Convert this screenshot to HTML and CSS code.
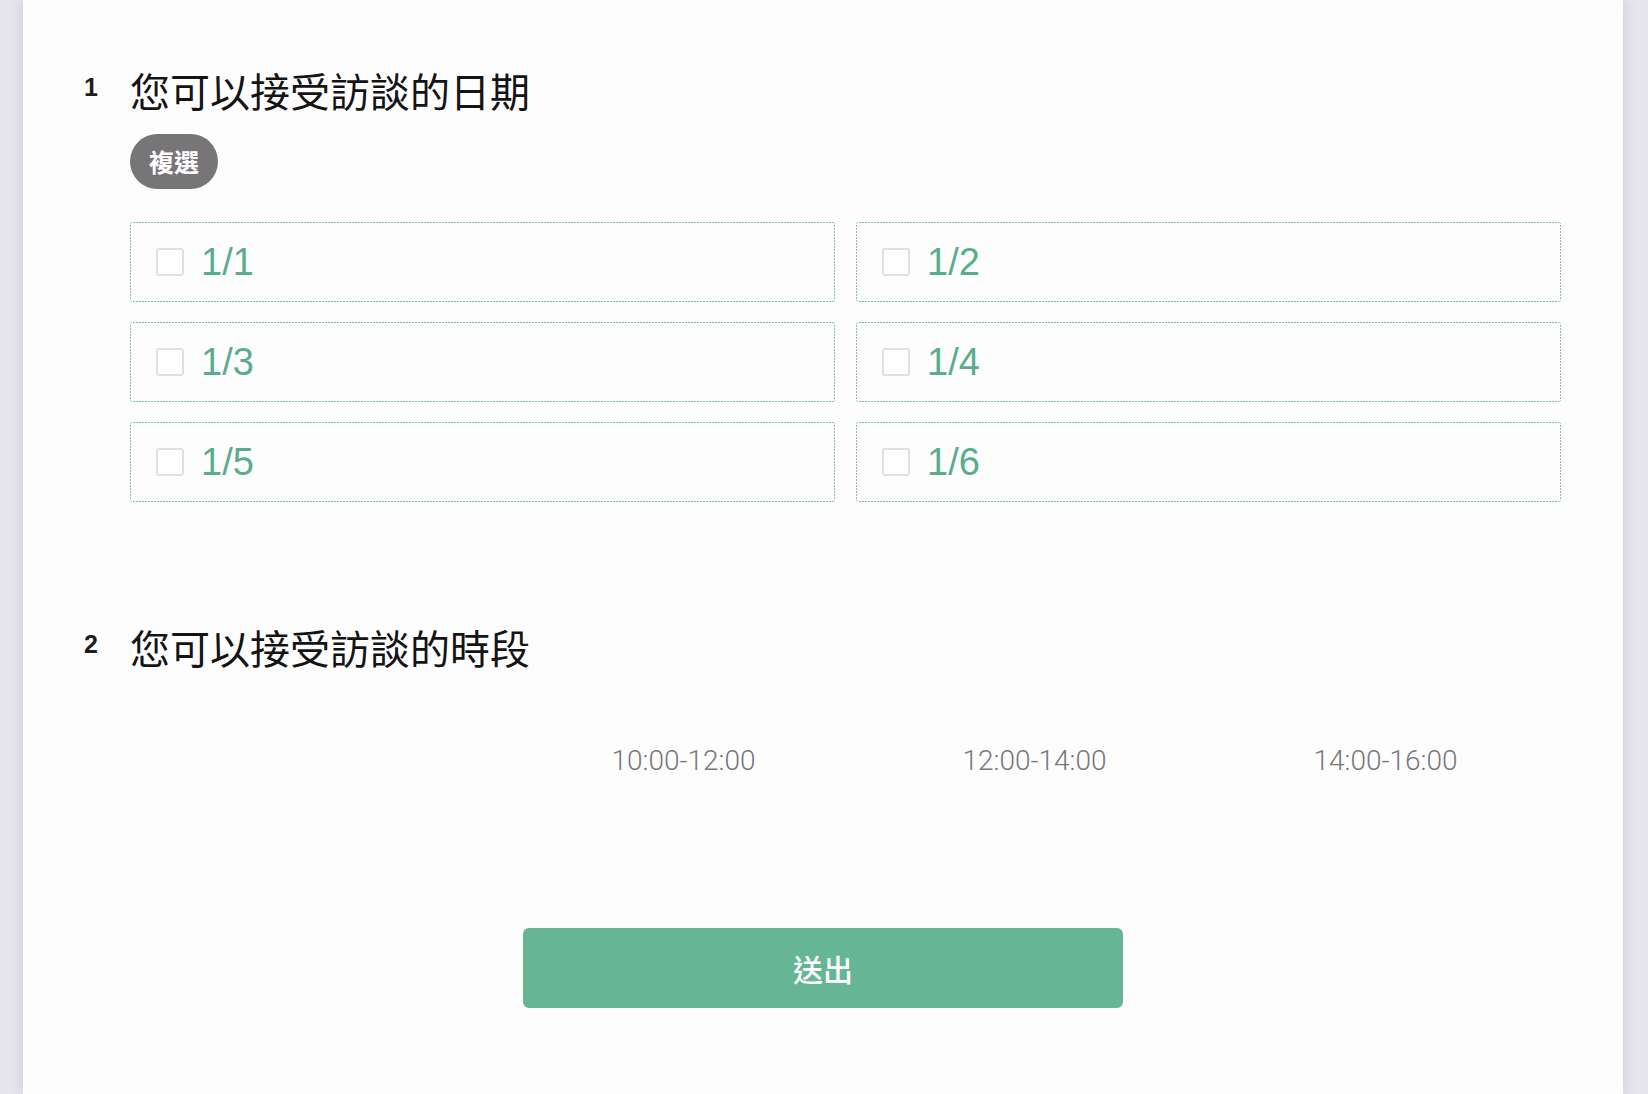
FILE: index.html
```html
<!DOCTYPE html>
<html lang="zh-Hant">
<head>
<meta charset="utf-8">
<title>訪談時間調查</title>
<link rel="stylesheet" href="styles.css">
</head>
<body>
<div class="page">
  <main class="card">
    <section class="question q-dates">
      <div class="q-head">
        <span class="q-num">1</span>
        <h2 class="q-title">您可以接受訪談的日期</h2>
      </div>
      <div class="q-body">
        <span class="pill">複選</span>
        <div class="options">
          <label class="option"><span class="box"></span><span class="opt-text">1/1</span></label>
          <label class="option"><span class="box"></span><span class="opt-text">1/2</span></label>
          <label class="option"><span class="box"></span><span class="opt-text">1/3</span></label>
          <label class="option"><span class="box"></span><span class="opt-text">1/4</span></label>
          <label class="option"><span class="box"></span><span class="opt-text">1/5</span></label>
          <label class="option"><span class="box"></span><span class="opt-text">1/6</span></label>
        </div>
      </div>
    </section>

    <section class="question q-times">
      <div class="q-head">
        <span class="q-num">2</span>
        <h2 class="q-title">您可以接受訪談的時段</h2>
      </div>
      <div class="q-body">
        <div class="matrix">
          <span class="m-corner"></span>
          <span class="m-col">10:00-12:00</span>
          <span class="m-col">12:00-14:00</span>
          <span class="m-col">14:00-16:00</span>
        </div>
      </div>
    </section>

    <div class="actions">
      <button class="submit" type="button">送出</button>
    </div>
  </main>
</div>
</body>
</html>
```

FILE: styles.css
```css
html, body {
  margin: 0;
  padding: 0;
}

body {
  background: #e7e6ec;
  font-family: "Liberation Sans", "Noto Sans CJK TC", sans-serif;
  color: #1b1b1b;
}

.page {
  display: flex;
  padding-left: 23px;
  min-height: 1094px;
}

.card {
  width: 1600px;
  min-height: 1094px;
  box-sizing: border-box;
  background: #fefdfe;
  box-shadow: 0 0 14px rgba(60, 55, 80, 0.16);
  padding: 66px 62px 0 61px;
}

.q-head {
  display: flex;
  align-items: flex-start;
}

.q-num {
  width: 46px;
  flex: none;
  margin-top: 9px;
  font-family: "Liberation Sans", sans-serif;
  font-weight: 700;
  font-size: 25px;
  line-height: 25px;
  color: #1e1e1e;
}

.q-title {
  margin: 0;
  font-family: "Noto Sans CJK TC", "Noto Sans CJK SC", sans-serif;
  font-weight: 400;
  font-size: 40px;
  line-height: 48px;
  color: #141414;
}

.q-body {
  margin-left: 46px;
  display: flex;
  flex-direction: column;
  align-items: flex-start;
}

.pill {
  margin-top: 20px;
  height: 55px;
  padding: 0 19px;
  border-radius: 28px;
  background: #777577;
  color: #fff;
  font-family: "Noto Sans CJK TC", sans-serif;
  font-weight: 700;
  font-size: 25px;
  line-height: 55px;
}

.options {
  margin-top: 33px;
  width: 100%;
  display: grid;
  grid-template-columns: 1fr 1fr;
  gap: 20px 21px;
}

.option {
  height: 80px;
  box-sizing: border-box;
  border-radius: 3px;
  display: flex;
  align-items: center;
  padding-left: 26px;
  background:
    repeating-linear-gradient(90deg, #78c3a7 0 2px, transparent 2px 3px) left top / 100% 1px no-repeat,
    repeating-linear-gradient(90deg, #78c3a7 0 2px, transparent 2px 3px) left bottom / 100% 1px no-repeat,
    repeating-linear-gradient(180deg, #94bdae 0 2px, transparent 2px 3px) left top / 1px 100% no-repeat,
    repeating-linear-gradient(180deg, #94bdae 0 2px, transparent 2px 3px) right top / 1px 100% no-repeat;
}

.box {
  width: 28px;
  height: 28px;
  box-sizing: border-box;
  border: 2px solid #e0dfe4;
  border-radius: 3px;
  background: #fff;
  flex: none;
}

.opt-text {
  margin-left: 17px;
  font-family: "Liberation Sans", sans-serif;
  font-size: 38px;
  line-height: 1;
  color: #5aad8c;
}

.q-times {
  margin-top: 121px;
}

.matrix {
  margin-top: 70px;
  width: 100%;
  display: grid;
  grid-template-columns: 378px repeat(3, 1fr);
}

.m-col {
  text-align: center;
  font-family: Roboto, "Liberation Sans", sans-serif;
  font-weight: 300;
  font-size: 28px;
  line-height: 40px;
  color: #78777b;
}

.actions {
  margin-top: 147px;
  display: flex;
  justify-content: center;
  padding-left: 1px;
}

.submit {
  width: 600px;
  height: 80px;
  border: none;
  border-radius: 6px;
  background: #66b695;
  color: #fff;
  font-family: "Noto Sans CJK TC", sans-serif;
  font-weight: 500;
  font-size: 30px;
  line-height: 76px;
  padding: 0;
  cursor: pointer;
}
```
